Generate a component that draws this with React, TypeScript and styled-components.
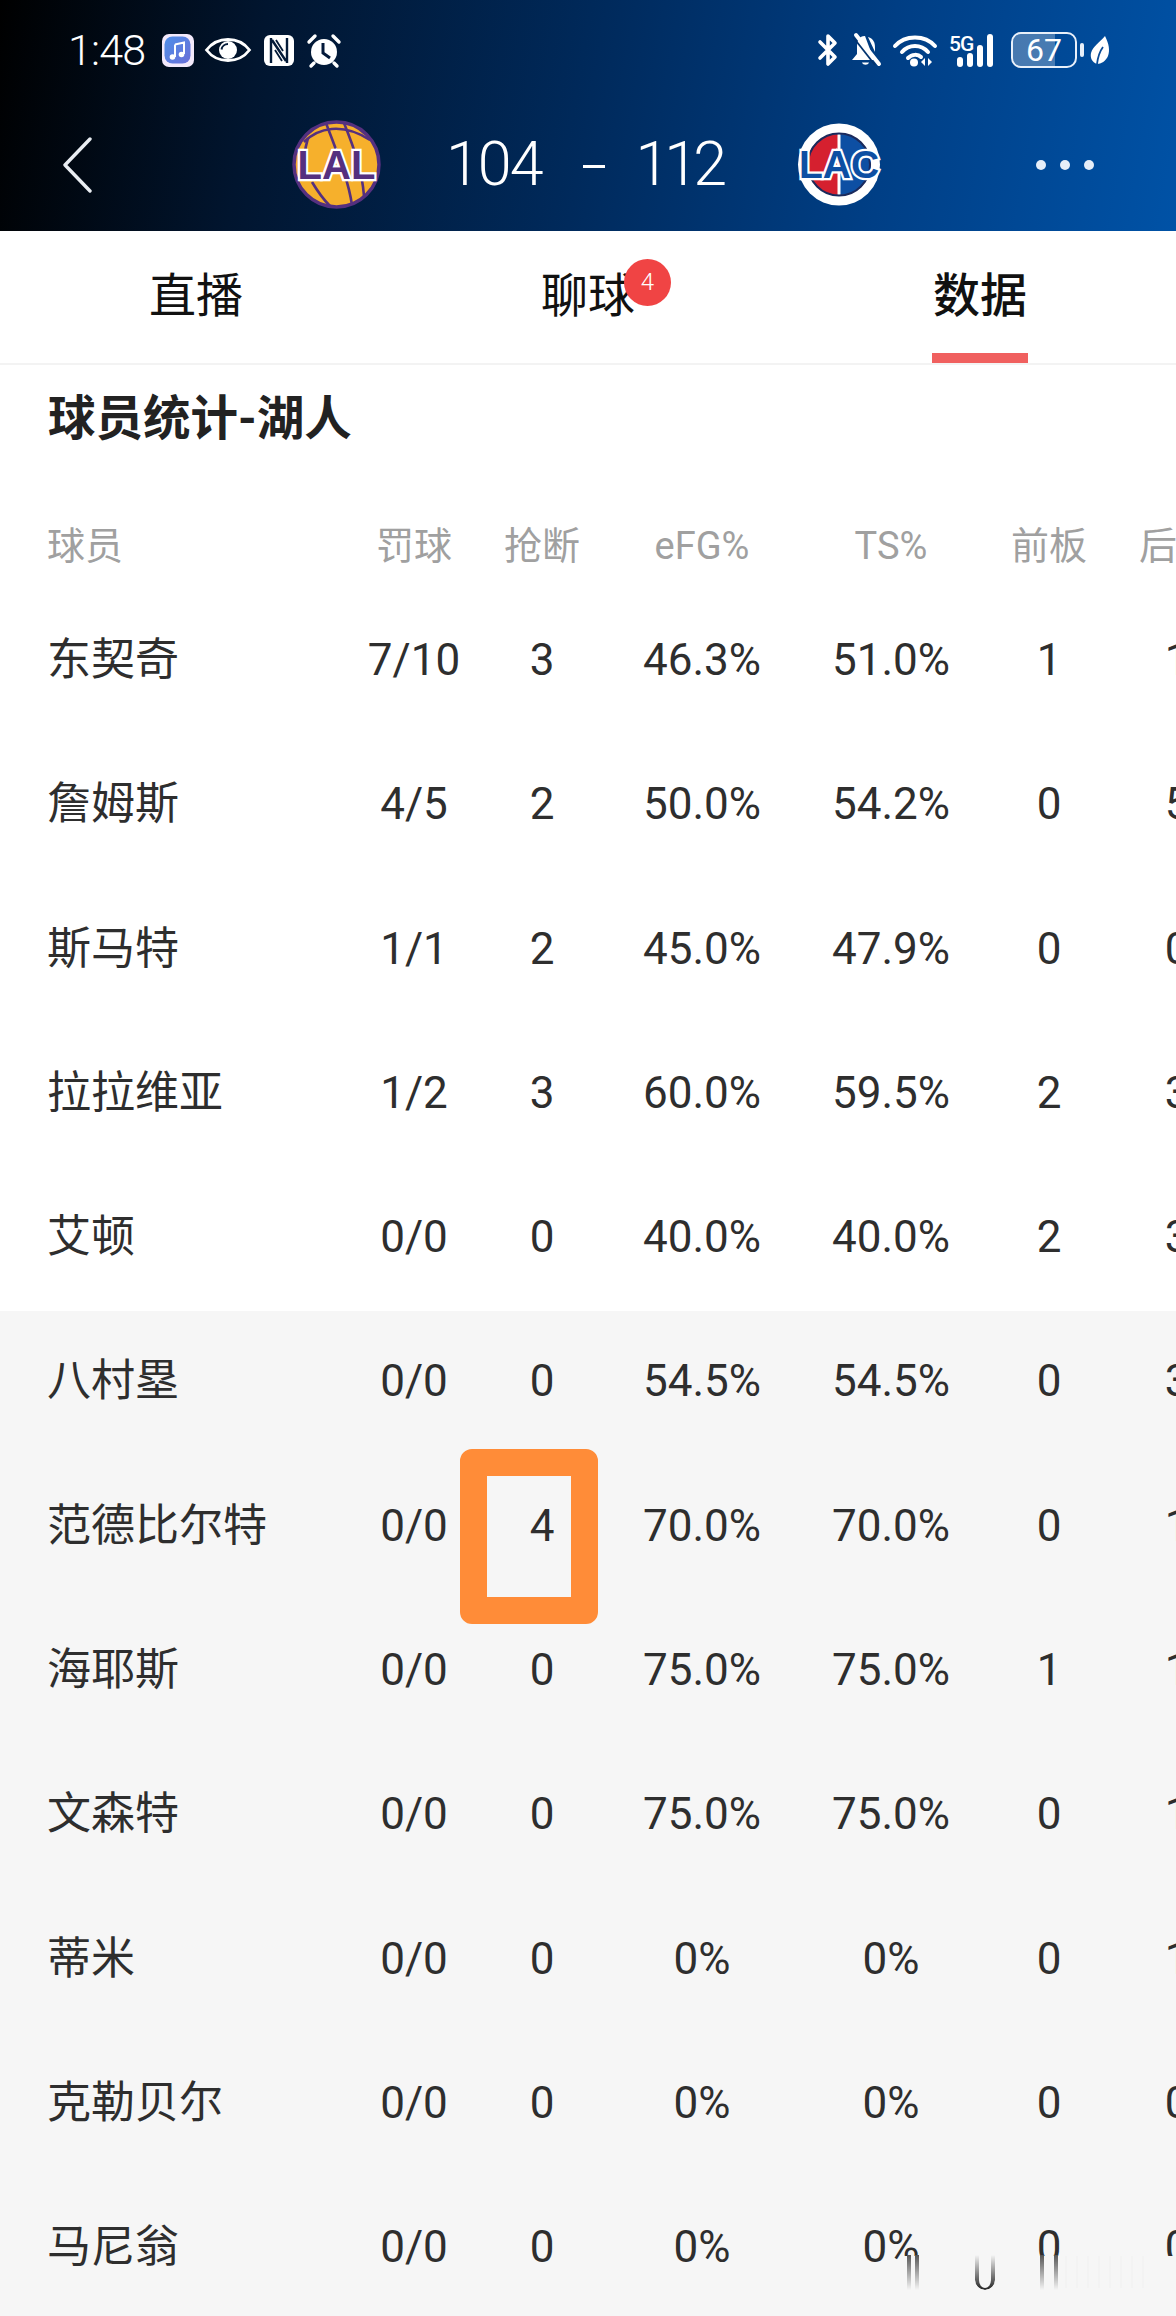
import React from "react";
import styled, { createGlobalStyle } from "styled-components";

const Global = createGlobalStyle`
  html, body { margin: 0; padding: 0; background: #fff; }
  * { box-sizing: border-box; }
`;

const Page = styled.div`
  position: relative;
  width: 1176px;
  height: 2316px;
  overflow: hidden;
  background: #fff;
  font-family: Roboto, "Noto Sans CJK SC", sans-serif;
  color: #2b2b2b;
`;

const Header = styled.header`
  height: 231px;
  padding-top: 31px;
  background: linear-gradient(100deg, #000 0%, #01152f 22%, #002a5c 50%, #003f86 75%, #0052a6 100%);
  color: #fff;
`;

const StatusBar = styled.div`
  height: 38px;
  padding: 0 66px 0 68px;
  display: flex;
  align-items: center;
  justify-content: space-between;
`;

const StatusGroup = styled.div`
  display: flex;
  align-items: center;
`;

const Clock = styled.span`
  width: 94px;
  font-size: 43px;
  font-weight: 300;
  line-height: 38px;
  letter-spacing: -0.8px;
`;

const StatusIcon = styled.svg<{ $gap?: number }>`
  display: block;
  flex: none;
  overflow: visible;
  margin-right: ${(p) => p.$gap ?? 0}px;
`;

const Battery = styled.div`
  position: relative;
  width: 66px;
  height: 36px;
  margin-right: 3px;
  border: 2.5px solid #e8f0fa;
  border-radius: 10px;
  overflow: hidden;
  display: flex;
  align-items: center;
  justify-content: center;
  font-size: 32px;
  font-weight: 400;
  line-height: 1;
`;

const BatteryFill = styled.span`
  position: absolute;
  left: 0;
  top: 0;
  bottom: 0;
  background: rgba(255, 255, 255, 0.28);
`;

const BatteryText = styled.span`
  position: relative;
`;

const BatteryTip = styled.span`
  width: 4px;
  height: 14px;
  margin-right: 6px;
  border-radius: 2px;
  background: #e8f0fa;
`;

const Nav = styled.div`
  height: 89px;
  margin-top: 51px;
  padding-left: 62px;
  display: flex;
  align-items: center;
`;

const BackIcon = styled.svg`
  display: block;
  flex: none;
  margin-right: 200px;
`;

const Score = styled.div`
  width: 279px;
  margin: 0 71px 0 65px;
  display: flex;
  align-items: center;
  font-size: 61px;
  font-weight: 300;
  line-height: 89px;
  white-space: nowrap;
`;

const ScoreValue = styled.span<{ $tight: number }>`
  letter-spacing: ${(p) => p.$tight}px;
`;

const ScoreDash = styled.span`
  flex: none;
  width: 22px;
  height: 3px;
  margin: 4px 31px 0 41px;
  background: #fff;
`;

const Logo = styled.svg`
  display: block;
  flex: none;
`;

const Dots = styled.div`
  margin-left: 154px;
  display: flex;
  gap: 14px;
`;

const Dot = styled.span`
  width: 10px;
  height: 10px;
  border-radius: 50%;
  background: #e6eef8;
`;

const Tabs = styled.nav`
  height: 134px;
  display: grid;
  grid-template-columns: repeat(3, 1fr);
  border-bottom: 2px solid #f3f3f3;
`;

const Tab = styled.div<{ $active?: boolean }>`
  position: relative;
  display: flex;
  align-items: flex-start;
  justify-content: center;
  padding-top: 33px;
  font-size: 47px;
  line-height: 64px;
  font-weight: ${(p) => (p.$active ? 500 : 400)};
  color: #111;
`;

const TabLabel = styled.span`
  position: relative;
  display: block;
`;

const Badge = styled.span`
  position: absolute;
  left: 83px;
  top: -5px;
  width: 47px;
  height: 47px;
  border-radius: 50%;
  background: #f04444;
  color: #fff;
  font-size: 24px;
  font-weight: 300;
  line-height: 47px;
  text-align: center;
`;

const Underline = styled.span`
  position: absolute;
  left: 50%;
  bottom: 0;
  width: 96px;
  height: 10px;
  margin-left: -48px;
  background: #f0605f;
`;

const Title = styled.h2`
  margin: 0;
  height: 113px;
  padding: 22px 0 0 48px;
  font-size: 47.500px;
  line-height: 64px;
  font-weight: 700;
  color: #222;
`;

const HeadRow = styled.div`
  height: 112px;
  padding: 43px 0 0 47px;
  display: grid;
  grid-template-columns: 301px 132px 124px 196px 182px 134px 122px;
  align-items: center;
  align-content: start;
  font-size: 38px;
  line-height: 50px;
  color: #a0a0a0;
`;

const Row = styled.div<{ $bench?: boolean }>`
  height: 144.27px;
  padding-left: 47px;
  display: grid;
  grid-template-columns: 301px 132px 124px 196px 182px 134px 122px;
  align-items: center;
  font-size: 44px;
  font-weight: 400;
  color: #2e2e2e;
  background: ${(p) => (p.$bench ? "#f6f6f6" : "#fff")};
`;

const Name = styled.div<{ $raise?: boolean }>`
  white-space: nowrap;
  padding-bottom: ${(p) => (p.$raise ? "12px" : "0")};
`;

const Cell = styled.div<{ $raise?: boolean }>`
  position: relative;
  text-align: center;
  white-space: nowrap;
  padding-bottom: ${(p) => (p.$raise ? "4px" : "0")};
`;

const Highlight = styled.span`
  position: absolute;
  left: -20px;
  top: -51px;
  width: 138px;
  height: 175px;
  border: 27px solid #ff8c38;
  border-radius: 12px;
`;

const WatermarkMask = styled.div`
  position: absolute;
  left: 900px;
  top: 2256px;
  width: 276px;
  height: 48px;
  background: #f6f6f6;
`;

const Stem = styled.span<{ $x: number; $w: number; $rounded?: boolean; $dark?: boolean }>`
  position: absolute;
  left: ${(p) => p.$x}px;
  top: -1px;
  width: ${(p) => p.$w}px;
  height: 35px;
  border-style: solid;
  border-width: 0 4px ${(p) => (p.$rounded ? "2px" : "0")};
  border-color: ${(p) => (p.$dark ? "#222" : "#555")};
  border-radius: ${(p) => (p.$rounded ? "0 0 10px 10px" : "0")};
  mask-image: ${(p) =>
    p.$rounded
      ? "linear-gradient(to bottom, transparent 0%, #000 100%)"
      : "linear-gradient(to bottom, #000 0%, transparent 100%)"};
`;

const Faint = styled.span`
  position: absolute;
  left: 165px;
  top: 0;
  width: 85px;
  height: 32px;
  background: repeating-linear-gradient(90deg, #f3f3f3 0 2px, transparent 2px 11px);
`;

const players: string[][] = [
  ["东契奇", "7/10", "3", "46.3%", "51.0%", "1", "1"],
  ["詹姆斯", "4/5", "2", "50.0%", "54.2%", "0", "5"],
  ["斯马特", "1/1", "2", "45.0%", "47.9%", "0", "0"],
  ["拉拉维亚", "1/2", "3", "60.0%", "59.5%", "2", "3"],
  ["艾顿", "0/0", "0", "40.0%", "40.0%", "2", "3"],
  ["八村塁", "0/0", "0", "54.5%", "54.5%", "0", "3"],
  ["范德比尔特", "0/0", "4", "70.0%", "70.0%", "0", "1"],
  ["海耶斯", "0/0", "0", "75.0%", "75.0%", "1", "1"],
  ["文森特", "0/0", "0", "75.0%", "75.0%", "0", "1"],
  ["蒂米", "0/0", "0", "0%", "0%", "0", "1"],
  ["克勒贝尔", "0/0", "0", "0%", "0%", "0", "0"],
  ["马尼翁", "0/0", "0", "0%", "0%", "0", "0"],
];

const heads = ["罚球", "抢断", "eFG%", "TS%", "前板", "后板"];

const LakersLogo = () => (
  <Logo width="89" height="89" viewBox="0 0 89 89">
    <circle cx="44.5" cy="44.5" r="42.5" fill="#f6b02c" stroke="#55307f" strokeWidth="3.5" />
    <g fill="none" stroke="#55307f" strokeWidth="2.6">
      <path d="M12 22C26 8 50 2 78 20" />
      <path d="M34 3C44 30 56 58 60 85" />
      <path d="M52 3C62 28 70 50 72 76" />
      <path d="M16 18C12 30 12 44 14 52" />
      <path d="M20 62C26 72 32 80 38 86" />
    </g>
    <text x="44.5" y="59" textAnchor="middle" fontFamily="Liberation Sans, sans-serif" fontWeight="700" fontSize="40" fill="#55307f" stroke="#fff" strokeWidth="4.5" paintOrder="stroke">LAL</text>
  </Logo>
);

const ClippersLogo = () => (
  <Logo width="86" height="85" viewBox="0 0 86 85">
    <circle cx="43" cy="42.5" r="41" fill="#fff" />
    <path d="M41.500 12A30.500 30.500 0 0 0 41.500 73Z" fill="#d5202f" />
    <path d="M44.500 12A30.500 30.500 0 0 1 44.500 73Z" fill="#0d4fa3" />
    <circle cx="43" cy="42.5" r="31" fill="none" stroke="#1b2a5c" strokeWidth="2" />
    <text x="43" y="56" textAnchor="middle" fontFamily="Liberation Sans, sans-serif" fontWeight="700" fontSize="39" fill="#0d4fa3" stroke="#fff" strokeWidth="4.5" paintOrder="stroke">LAC</text>
  </Logo>
);

export default function App() {
  return (
    <Page>
      <Global />
      <Header>
        <StatusBar>
          <StatusGroup>
            <Clock>1:48</Clock>
            <StatusIcon $gap={11} width="32" height="33" viewBox="0 0 32 33">
              <defs>
                <linearGradient id="mus" x1="0" y1="0" x2="1" y2="1">
                  <stop offset="0" stopColor="#4f8fe8" />
                  <stop offset="1" stopColor="#6a6fd8" />
                </linearGradient>
              </defs>
              <rect width="32" height="33" rx="7" fill="#f3e9fb" />
              <rect x="2.500" y="2.500" width="26" height="27" rx="8" fill="url(#mus)" />
              <path d="M13 10.500 22 8.500V20M13 10.500V23" fill="none" stroke="#fff" strokeWidth="2" />
              <circle cx="10.500" cy="23" r="2.800" fill="#fff" />
              <circle cx="19.500" cy="20.500" r="2.800" fill="#fff" />
            </StatusIcon>
            <StatusIcon $gap={12} width="46" height="24" viewBox="0 0 46 24">
              <path d="M1.500 12C8 3.500 15 1.500 23 1.500S38 3.500 44.500 12C38 20.500 31 22.500 23 22.500S8 20.500 1.500 12Z" fill="none" stroke="#fff" strokeWidth="2.800" />
              <circle cx="23" cy="12" r="9" fill="#fff" />
              <path d="M16.500 11.500C17 8 20 6 23 6" fill="none" stroke="#071d3b" strokeWidth="2" />
            </StatusIcon>
            <StatusIcon $gap={11} width="32" height="33" viewBox="0 0 32 33">
              <rect x="1" y="1" width="30" height="31" rx="6" fill="#fff" />
              <path d="M8 4V29M24 4V29M9 6 23 27" fill="none" stroke="#031a38" strokeWidth="2.400" />
              <path d="M13 6 20 17M12 16 19 27" fill="none" stroke="#031a38" strokeWidth="1.800" />
            </StatusIcon>
            <StatusIcon width="36" height="33" viewBox="0 0 36 33">
              <circle cx="18" cy="18" r="13" fill="#fff" />
              <path d="M17 9V19L24 24" fill="none" stroke="#03193a" strokeWidth="3" />
              <path d="M3 8 9 2M33 8 27 2M8 29 5 32M28 29 31 32" fill="none" stroke="#fff" strokeWidth="3.400" strokeLinecap="round" />
            </StatusIcon>
          </StatusGroup>
          <StatusGroup>
            <StatusIcon $gap={11} width="22" height="34" viewBox="0 0 22 34">
              <path d="M3 9 18 24 11 31V3L18 10 3 25" fill="none" stroke="#fff" strokeWidth="3.600" strokeLinecap="round" strokeLinejoin="round" />
            </StatusIcon>
            <StatusIcon $gap={12} width="31" height="33" viewBox="0 0 31 33">
              <path d="M15 2C8 2 7 8 7 14V20L2 26H24Z" fill="#fff" />
              <path d="M12 28.500C13 31.500 18 31.500 19 28.500Z" fill="#fff" />
              <path d="M18 3C24 5 25 9 25 14V18Z" fill="#fff" />
              <path d="M6 1 29 30" stroke="#fff" strokeWidth="4" strokeLinecap="round" />
              <path d="M3 3 25 31" stroke="#02336f" strokeWidth="1.800" />
            </StatusIcon>
            <StatusIcon $gap={12} width="44" height="33" viewBox="0 0 44 33">
              <g fill="none" stroke="#fff" strokeWidth="4" strokeLinecap="round">
                <path d="M2 12C12 .5 32 .5 42 12" />
                <path d="M9 18C16 10 28 10 35 18" />
                <path d="M15 24C19 20 25 20 28 23" />
              </g>
              <circle cx="21" cy="28.500" r="4" fill="#fff" />
              <path d="M32 24V32L28 28ZM35 24V32L39 28Z" fill="#fff" />
            </StatusIcon>
            <StatusIcon $gap={12} width="50" height="33" viewBox="0 0 50 33">
              <text x="0" y="17" fontFamily="Roboto, sans-serif" fontWeight="500" fontSize="21" letterSpacing="-1" fill="#fff">5G</text>
              <rect x="8" y="23" width="6" height="10" rx="3" fill="#fff" />
              <rect x="18" y="19" width="6" height="14" rx="3" fill="#fff" />
              <rect x="28" y="11" width="6" height="22" rx="3" fill="#fff" />
              <rect x="38" y="0" width="6" height="33" rx="3" fill="#fff" />
            </StatusIcon>
            <Battery>
              <BatteryFill style={{ width: "67%" }} />
              <BatteryText>67</BatteryText>
            </Battery>
            <BatteryTip />
            <StatusIcon width="20" height="28" viewBox="0 0 20 28">
              <path d="M15 0C19 8 20 14 18 20 16 25 11 28 7 28 2 26 0 22 1 17 3 10 10 6 15 0Z" fill="#fff" />
              <path d="M7 28C8 20 10 15 13 11" fill="none" stroke="#0a4b97" strokeWidth="1.800" />
            </StatusIcon>
          </StatusGroup>
        </StatusBar>
        <Nav>
          <BackIcon width="30" height="56" viewBox="0 0 30 56">
            <path d="M28 2 3 28 28 54" fill="none" stroke="#e9edf2" strokeWidth="3.400" strokeLinecap="round" strokeLinejoin="round" />
          </BackIcon>
          <LakersLogo />
          <Score>
            <ScoreValue $tight={-2}>104</ScoreValue>
            <ScoreDash />
            <ScoreValue $tight={-5}>112</ScoreValue>
          </Score>
          <ClippersLogo />
          <Dots>
            <Dot />
            <Dot />
            <Dot />
          </Dots>
        </Nav>
      </Header>
      <Tabs>
        <Tab>直播</Tab>
        <Tab>
          <TabLabel>
            聊球
            <Badge>4</Badge>
          </TabLabel>
        </Tab>
        <Tab $active>
          数据
          <Underline />
        </Tab>
      </Tabs>
      <Title>球员统计-湖人</Title>
      <HeadRow>
        <Name>球员</Name>
        {heads.map((h) => (
          <Cell key={h}>{h}</Cell>
        ))}
      </HeadRow>
      {players.map((p, i) => (
        <Row key={p[0]} $bench={i >= 5}>
          <Name $raise>{p[0]}</Name>
          {p.slice(1).map((v, j) => (
            <Cell key={j} $raise>
              {v}
              {p[0] === "范德比尔特" && j === 1 && <Highlight />}
            </Cell>
          ))}
        </Row>
      ))}
      <WatermarkMask>
        <Stem $x={7} $w={12} />
        <Stem $x={75} $w={20} $rounded $dark />
        <Stem $x={140} $w={18} />
        <Faint />
      </WatermarkMask>
    </Page>
  );
}
